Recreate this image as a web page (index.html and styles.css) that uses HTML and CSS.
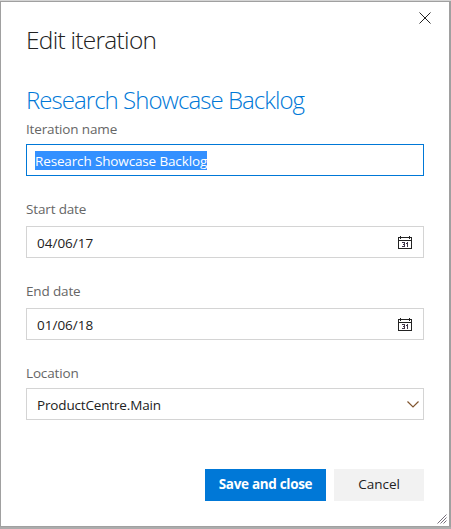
FILE: index.html
```html
<!DOCTYPE html>
<html lang="en">
<head>
<meta charset="utf-8">
<title>Edit iteration</title>
<link rel="stylesheet" href="styles.css">
</head>
<body>
<main class="dialog">
  <h1 class="title"><span class="t-title">Edit iteration</span></h1>
  <h2 class="subtitle"><span class="t-sub">Research Showcase Backlog</span></h2>
  <div class="label l-name">Iteration name</div>
  <div class="field focused"><span class="selected">Research Showcase Backlog</span></div>
  <div class="label l-start">Start date</div>
  <div class="field"><span class="date">04/06/17</span>
    <svg class="cal" width="14" height="14" viewBox="0 0 14 14" shape-rendering="crispEdges"><path d="M0 1h14v12H0zM1 2v2h12V2zM1 5v7h12V5z" fill="#222" fill-rule="evenodd"/><path d="M2 0h1v3H2zM11 0h1v3h-1z" fill="#222"/><path d="M4 6h3v5H4v-1h2V9H5V8h1V7H4zM9 6h1v5H9V8H8V7h1z" fill="#40364a"/></svg>
  </div>
  <div class="label l-end">End date</div>
  <div class="field"><span class="date">01/06/18</span>
    <svg class="cal" width="14" height="14" viewBox="0 0 14 14" shape-rendering="crispEdges"><path d="M0 1h14v12H0zM1 2v2h12V2zM1 5v7h12V5z" fill="#222" fill-rule="evenodd"/><path d="M2 0h1v3H2zM11 0h1v3h-1z" fill="#222"/><path d="M4 6h3v5H4v-1h2V9H5V8h1V7H4zM9 6h1v5H9V8H8V7h1z" fill="#40364a"/></svg>
  </div>
  <div class="label l-loc">Location</div>
  <div class="field"><span class="loc">ProductCentre.Main</span>
    <svg class="chev" width="12" height="7" viewBox="0 0 12 7"><path d="M.5.5 6 6 11.500.5" fill="none" stroke="#80552f" stroke-width="1.2"/></svg>
  </div>
  <div class="actions">
    <button class="btn primary">Save and close</button>
    <button class="btn cancel">Cancel</button>
  </div>
  <svg class="close" width="12" height="12" viewBox="0 0 12 12"><path d="M.5.5l11 11M11.500.5l-11 11" stroke="#222" stroke-width="1"/></svg>
  <svg class="grip" width="10" height="10" viewBox="0 0 10 10"><path d="M.5 9.500l9-9M3.500 9.500l6-6M6.500 9.500l3-3" stroke="#77707c" stroke-width="1"/></svg>
</main>
</body>
</html>
```
FILE: styles.css
```css
* { box-sizing: border-box; }
html { background: #a0a0a0; }
body {
  margin: 0;
  width: 451px;
  height: 529px;
  padding-top: 1px;
  overflow: hidden;
  background: linear-gradient(#d5d5d5 0 1px, #a0a0a0 1px 527px, #acacac 527px);
  font-family: "Open Sans", "Noto Sans", sans-serif;
  font-size: 13.500px;
  color: #222;
}
.dialog {
  position: relative;
  width: 450px;
  height: 526px;
  padding: 22px 25px 0;
  border: 1px solid #a0a0a0;
  background: #fff;
}
.title, .subtitle {
  margin: 0;
  font-size: 24.500px;
  font-weight: 300;
  line-height: 32px;
  white-space: nowrap;
}
.subtitle { margin-top: 28px; font-size: 24px; color: #0078d7; }
.t-title { letter-spacing: -0.73px; }
.t-sub { letter-spacing: -0.95px; }
.label { height: 18px; line-height: 19px; letter-spacing: -0.15px; color: #666; }
.l-name { margin: 4px 0 6px; }
.l-start { margin: 24px 0 8px; }
.l-end { margin: 24px 0 8px; }
.l-loc { margin: 24px 0 6px; }
.field {
  display: flex;
  align-items: center;
  justify-content: space-between;
  width: 398px;
  height: 32px;
  padding: 0 11px 0 10px;
  border: 1px solid #d4d4d4;
  white-space: nowrap;
}
.focused { padding-left: 8px; border-color: #0078d7; }
.selected { height: 19px; line-height: 20px; letter-spacing: -0.14px; background: #3390ff; color: #fff; }
.date { line-height: 20px; padding-top: 1px; }
.loc { line-height: 20px; padding-top: 1px; letter-spacing: -0.16px; }
.cal { margin-top: 2px; }
.chev { margin-right: -7px; }
.actions { display: flex; gap: 8px; justify-content: flex-end; width: 398px; margin-top: 49px; }
.btn {
  height: 32px;
  padding: 0 0 2px;
  border: 0;
  font: 500 13.500px/30px "Open Sans", "Noto Sans", sans-serif;
  white-space: nowrap;
}
.primary { width: 121px; background: #0078d7; color: #fff; font-weight: 700; letter-spacing: -0.31px; }
.cancel { width: 90px; background: #f2f2f2; color: #222; }
.close { position: absolute; right: 18px; top: 10px; }
.grip { position: absolute; right: 2px; bottom: 2px; }
```
